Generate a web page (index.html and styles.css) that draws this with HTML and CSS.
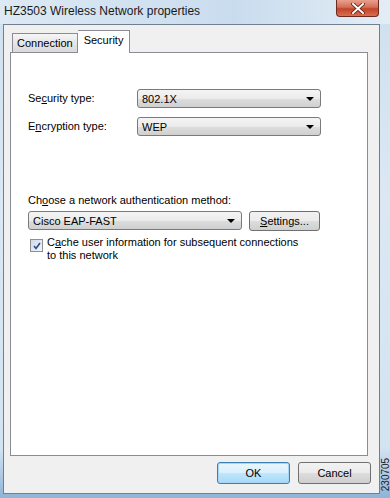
FILE: index.html
```html
<!DOCTYPE html>
<html lang="en">

<head>
    <meta charset="UTF-8">
    <title>HZ3503 Wireless Network properties</title>
    <link rel="stylesheet" href="styles.css">
</head>

<body>
    <div class="screen">
        <div class="titlebar">
            <span class="title">HZ3503 Wireless Network properties</span>
            <div class="close">
                <svg width="14" height="11" viewBox="0 0 14 11">
                    <path d="M2 1 L12 10 M12 1 L2 10" stroke="#5a1b12" stroke-width="3.6" stroke-linecap="square" />
                    <path d="M2 1 L12 10 M12 1 L2 10" stroke="#ffffff" stroke-width="2" stroke-linecap="square" />
                </svg>
            </div>
        </div>

        <div class="client">
            <div class="tabs">
                <div class="tab">Connection</div>
                <div class="tab active">Security</div>
            </div>

            <div class="panel">
                <div class="row first">
                    <label class="label">Se<u>c</u>urity type:</label>
                    <div class="combo wide">802.1X<span class="arrow"></span></div>
                </div>
                <div class="row">
                    <label class="label">E<u>n</u>cryption type:</label>
                    <div class="combo wide">WEP<span class="arrow"></span></div>
                </div>

                <div class="method">
                    <div class="caption">Ch<u>o</u>ose a network authentication method:</div>
                    <div class="method-row">
                        <div class="combo long">Cisco EAP-FAST<span class="arrow"></span></div>
                        <button class="btn settings"><u>S</u>ettings...</button>
                    </div>
                    <div class="check-row">
                        <span class="checkbox">
                            <svg width="8" height="8" viewBox="0 0 8 8">
                                <path d="M1 4 L3 6.5 L7 1" fill="none" stroke="#2a4d8f" stroke-width="1.6" />
                            </svg>
                        </span>
                        <span class="check-text">C<u>a</u>che user information for subsequent connections<br>to this network</span>
                    </div>
                </div>
            </div>

            <div class="buttons">
                <button class="btn default">OK</button>
                <button class="btn">Cancel</button>
            </div>
        </div>

        <div class="figure">230705</div>
    </div>
</body>

</html>
```

FILE: styles.css
```css
/* General styles */
body {
    margin: 0;
    padding: 0;
    font-family: 'Liberation Sans', Arial, sans-serif;
    font-size: 11px;
    color: #000000;
}

.screen {
    position: relative;
    width: 390px;
    height: 498px;
    display: flex;
    flex-direction: column;
    background: linear-gradient(180deg, #cfe0ef 0%, #dbe8f4 40%, #d2e3f1 90%, #8fb4d6 100%);
    overflow: hidden;
}

/* Title bar */
.titlebar {
    height: 24px;
    display: flex;
    align-items: flex-start;
    justify-content: space-between;
    padding: 0 11px 0 4px;
    background: linear-gradient(90deg, #dde9f4 0%, #c9dcee 60%, #e3edf6 100%);
}

.title {
    font-size: 12px;
    line-height: 22px;
    color: #1a1a1a;
}

.close {
    width: 43px;
    height: 17px;
    display: flex;
    align-items: center;
    justify-content: center;
    border: 1px solid #6b2b22;
    border-top: none;
    border-radius: 0 0 4px 4px;
    box-sizing: border-box;
    background: linear-gradient(180deg, #e8a08f 0%, #d56e55 45%, #c2432a 55%, #d9704f 100%);
}

/* Client area */
.client {
    flex: 1;
    display: flex;
    flex-direction: column;
    margin: 0 10px 4px 3px;
    padding: 5px 11px 0 6px;
    background: #f0f0f0;
    border: 1px solid #6f7f8f;
}

.tabs {
    display: flex;
    align-items: flex-end;
    height: 22px;
    padding-left: 2px;
}

.tab {
    height: 18px;
    line-height: 19px;
    padding: 0 4px;
    border: 1px solid #898c95;
    border-bottom: none;
    background: linear-gradient(180deg, #f6f6f6 0%, #e6e6e6 50%, #d9d9d9 100%);
}

.tab.active {
    height: 22px;
    line-height: 19px;
    margin-bottom: -1px;
    padding: 0 6px;
    background: #ffffff;
    border-left: none;
    position: relative;
    z-index: 1;
}

.panel {
    height: 402px;
    background: #ffffff;
    border: 1px solid #898c95;
    padding: 0 46px 0 17px;
}

.row {
    display: flex;
    align-items: center;
    height: 20px;
    margin-top: 8px;
}

.row.first {
    margin-top: 35px;
}

.label {
    width: 109px;
}

.combo {
    position: relative;
    height: 19px;
    line-height: 18px;
    padding-left: 4px;
    box-sizing: border-box;
    border: 1px solid #7a7a7a;
    border-radius: 3px;
    background: linear-gradient(180deg, #f4f4f4 0%, #ebebeb 50%, #dddddd 51%, #d0d0d0 100%);
}

.combo.wide {
    flex: 1;
}

.combo.long {
    width: 214px;
}

.arrow {
    position: absolute;
    right: 6px;
    top: 7px;
    border-left: 4px solid transparent;
    border-right: 4px solid transparent;
    border-top: 4px solid #000000;
}

.method {
    margin-top: 56px;
}

.caption {
    line-height: 16px;
}

.method-row {
    display: flex;
    gap: 7px;
    margin-top: 3px;
}

.btn {
    font-family: inherit;
    font-size: 11px;
    color: #000000;
    height: 22px;
    padding: 0;
    border: 1px solid #707070;
    border-radius: 3px;
    background: linear-gradient(180deg, #f2f2f2 0%, #ebebeb 50%, #dddddd 51%, #cfcfcf 100%);
}

.settings {
    width: 71px;
    height: 20px;
}

.check-row {
    display: flex;
    align-items: flex-start;
    margin-top: 5px;
    padding-left: 2px;
}

.checkbox {
    width: 11px;
    height: 11px;
    margin-top: 3px;
    margin-right: 4px;
    display: flex;
    align-items: center;
    justify-content: center;
    border: 1px solid #8f8f8f;
    background: linear-gradient(135deg, #cfd9e8 0%, #f4f7fb 100%);
}

.check-text {
    line-height: 13px;
}

/* Dialog buttons */
.buttons {
    display: flex;
    justify-content: flex-end;
    gap: 8px;
    margin-top: 6px;
    margin-right: -3px;
}

.buttons .btn {
    width: 73px;
}

.btn.default {
    border-color: #3c7fb1;
    background: linear-gradient(180deg, #eaf6fd 0%, #d9f0fc 50%, #bee6fd 51%, #a7d9f5 100%);
    box-shadow: inset 0 0 0 1px #a6d6f2;
}

/* Figure number */
.figure {
    position: absolute;
    right: -12px;
    bottom: 18px;
    transform: rotate(-90deg);
    font-family: 'Liberation Sans', sans-serif;
    font-size: 10px;
    color: #222222;
}
```
